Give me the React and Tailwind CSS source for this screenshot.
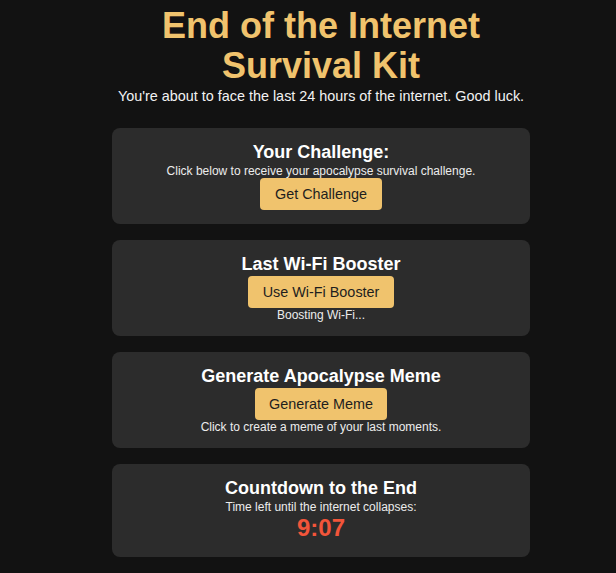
export default function App() {
  const card = "w-[418px] rounded-[8px] bg-[#2c2c2c] p-[14px] flex flex-col items-center text-center";
  const btn = "h-[32px] rounded-[4px] bg-[#f0c36d] px-[14.5px] text-[14.4px] leading-none text-[#1e1e1e]";
  const title = "text-[18px] leading-[1.2] font-bold text-white";
  const note = "text-[12px] leading-[1.2] text-[#ececec]";
  return (
    <div
      className="min-h-[573px] bg-[#121212] text-white pl-[26px] pt-[6px] pb-[18px] flex flex-col items-center"
      style={{ fontFamily: '"Liberation Sans", Arial, sans-serif' }}
    >
      <h1 className="text-[36px] leading-[1.1] font-bold text-[#f0c36d] text-center">
        End of the Internet
        <br />
        Survival Kit
      </h1>
      <p className="text-[14.4px] leading-[1.2] text-[#f2f2f2] mt-[3px]">
        You're about to face the last 24 hours of the internet. Good luck.
      </p>

      <div className="mt-[23px] flex flex-col gap-[16px]">
        <section className={card}>
          <h2 className={title}>Your Challenge:</h2>
          <p className={note}>Click below to receive your apocalypse survival challenge.</p>
          <button className={btn}>Get Challenge</button>
        </section>

        <section className={card}>
          <h2 className={title}>Last Wi-Fi Booster</h2>
          <button className={btn}>Use Wi-Fi Booster</button>
          <p className={note}>Boosting Wi-Fi...</p>
        </section>

        <section className={card}>
          <h2 className={title}>Generate Apocalypse Meme</h2>
          <button className={btn}>Generate Meme</button>
          <p className={note}>Click to create a meme of your last moments.</p>
        </section>

        <section className={card}>
          <h2 className={title}>Countdown to the End</h2>
          <p className={note}>Time left until the internet collapses:</p>
          <div className="text-[24px] leading-[1.2] font-bold text-[#f2553a]">9:07</div>
        </section>
      </div>
    </div>
  );
}
